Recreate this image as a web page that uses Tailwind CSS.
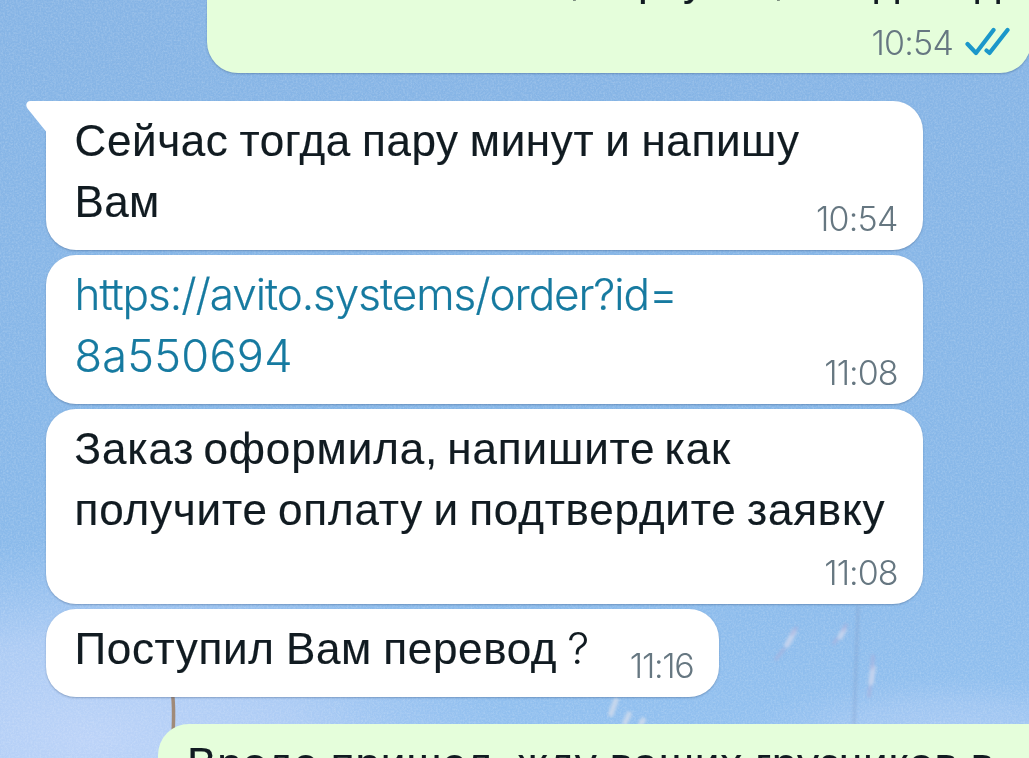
<!DOCTYPE html>
<html lang="ru">
<head>
<meta charset="utf-8">
<title>Чат</title>
<script src="https://cdn.jsdelivr.net/npm/@tailwindcss/browser@4"></script>
</head>
<body class="relative h-[758px] w-[1029px] overflow-hidden bg-[#8abaea] font-['Liberation_Sans',sans-serif] text-[44px] leading-[61px] text-[#111b21]">

<!-- sky wallpaper -->
<svg class="absolute inset-0" width="1029" height="758" viewBox="0 0 1029 758">
  <defs>
    <linearGradient id="sky" x1="0" y1="0" x2="0" y2="1"><stop offset="0" stop-color="#86b4e5"/><stop offset=".65" stop-color="#88b8e9"/><stop offset="1" stop-color="#93c1f0"/></linearGradient>
    <radialGradient id="haze"><stop offset="0" stop-color="#bcd3f8"/><stop offset=".5" stop-color="#b4cff6" stop-opacity=".8"/><stop offset="1" stop-color="#a5c8f3" stop-opacity="0"/></radialGradient>
    <filter id="grain" x="0" y="0" width="100%" height="100%"><feTurbulence type="fractalNoise" baseFrequency=".55" numOctaves="2" seed="4"/><feColorMatrix values="0 0 0 0 1  0 0 0 0 1  0 0 0 0 1  .9 0 0 0 -.33"/></filter>
    <filter id="soft"><feGaussianBlur stdDeviation="1.5"/></filter>
  </defs>
  <rect width="1029" height="758" fill="url(#sky)"/>
  <ellipse cx="90" cy="740" rx="420" ry="200" fill="url(#haze)"/>
  <ellipse cx="950" cy="730" rx="200" ry="55" fill="url(#haze)" opacity=".5"/>
  <rect width="1029" height="758" filter="url(#grain)" opacity=".4"/>
  <path d="M172 690Q174.500 705 173 735" stroke="#a08a78" stroke-width="3.500" fill="none"/>
  <g filter="url(#soft)" stroke-linecap="round">
    <path d="M858 606L854 724" stroke="#839fcb" stroke-width="3" opacity=".4"/>
    <path d="M794 632L787 645M844 630L840 637M873 668L871 683" stroke="#c3d3ee" stroke-width="5.500"/>
    <path d="M796 628L792 634M846 625L843 630M873 656L872 668M784 649L776 659M837 639L834 643M870 687L869 696" stroke="#a9b4df" stroke-width="3.500" opacity=".7"/>
    <path d="M616 700L611 714M629 714L625 723M643 720L641 724" stroke="#d2dced" stroke-width="5.500" opacity=".8"/>
  </g>
</svg>

<main class="relative flex h-[758px] flex-col items-start overflow-hidden">
  <section class="ml-[207px] flex h-[73px] w-[824px] shrink-0 flex-col justify-between overflow-hidden rounded-b-[31px] bg-[#e5fedb] shadow-[0_1px_2px_rgba(40,70,110,.35)]">
    <div class="-mt-[51px] flex h-[61px] pl-[362px] [-webkit-text-stroke:.15px]"><span class="w-[69px]">,</span><span class="w-[45px]">р</span><span class="w-[90px]">у</span><span class="w-[101px]">,</span><span class="w-[101px]">д</span><span>д</span></div>
    <div class="flex items-end justify-end gap-[12px] pr-[20px] pb-[13px]">
      <time class="font-[Inter] text-[34px] leading-[34px] font-light tracking-[-0.8px] text-[#667781] [font-feature-settings:'calt'_0]">10:54</time>
      <svg class="mb-[3px]" width="46" height="30" viewBox="0 0 46 30" fill="none" stroke="#1b97ca" stroke-width="4.200" stroke-linecap="round" stroke-linejoin="round"><path d="M2.500 17L11 26L28.500 3M21.500 23.500L24.500 26L42.500 3"/></svg>
    </div>
  </section>

  <section class="relative mt-[27.500px] ml-[45.500px] flex h-[149px] w-[877px] shrink-0 justify-between rounded-[30px] rounded-tl-none bg-white pt-[9px] pr-[25px] pb-[14px] pl-[29px] shadow-[0_1px_2px_rgba(40,70,110,.35)]">
    <svg class="absolute top-0 -left-[20px]" width="22" height="32" viewBox="0 0 22 32" fill="#fff"><path d="M22 0H4.500C.5 0-1 4 1.500 7.500L20 30.500H22Z"/></svg>
    <p class="whitespace-nowrap [-webkit-text-stroke:.15px]"><span class="tracking-[.62px] [word-spacing:-1.800px]">Сейчас тогда пару минут и напишу</span><br><span class="tracking-[.4px]">Вам</span></p>
    <time class="-ml-20 self-end font-[Inter] text-[34px] leading-[34px] font-light tracking-[-0.8px] text-[#667781] [font-feature-settings:'calt'_0]">10:54</time>
  </section>

  <section class="mt-[5px] ml-[45.500px] flex h-[149px] w-[877px] shrink-0 justify-between rounded-[30px] bg-white pt-[9px] pr-[25px] pb-[14px] pl-[29px] shadow-[0_1px_2px_rgba(40,70,110,.35)]">
    <p class="whitespace-nowrap text-[#167aa0] [-webkit-text-stroke:.2px]"><span class="font-[Inter] font-light tracking-[-1.02px] [font-feature-settings:'calt'_0]">https://avito.systems/order?id=</span><br><span class="font-[Inter] text-[45px] font-light tracking-[.3px]">8a550694</span></p>
    <time class="self-end font-[Inter] text-[34px] leading-[34px] font-light tracking-[-1px] text-[#667781] [font-feature-settings:'calt'_0]">11:08</time>
  </section>

  <section class="mt-[5px] ml-[45.500px] flex h-[195px] w-[877px] shrink-0 flex-col rounded-[30px] bg-white pt-[9px] pr-[25px] pb-[14px] pl-[29px] shadow-[0_1px_2px_rgba(40,70,110,.35)]">
    <p class="whitespace-nowrap [-webkit-text-stroke:.15px]"><span class="tracking-[.88px] [word-spacing:-4px]">Заказ оформила, напишите как</span><br><span class="tracking-[.82px] [word-spacing:-2.7px]">получите оплату и подтвердите заявку</span></p>
    <time class="mt-auto self-end font-[Inter] text-[34px] leading-[34px] font-light tracking-[-1px] text-[#667781] [font-feature-settings:'calt'_0]">11:08</time>
  </section>

  <section class="mt-[5px] ml-[45.500px] flex h-[88px] w-[673px] shrink-0 justify-between rounded-[30px] bg-white pt-[9px] pr-[25px] pb-[14px] pl-[29px] shadow-[0_1px_2px_rgba(40,70,110,.35)]">
    <p class="whitespace-nowrap"><span class="tracking-[.65px] [word-spacing:-1.5px] [-webkit-text-stroke:.15px]">Поступил Вам перевод</span><span class="ml-[10px] font-[Inter] font-light">?</span></p>
    <time class="self-end font-[Inter] text-[34px] leading-[34px] font-light tracking-[-1.3px] text-[#667781] [font-feature-settings:'calt'_0]">11:16</time>
  </section>

  <section class="mt-[27px] ml-[158px] h-[120px] w-[900px] shrink-0 rounded-[31px] bg-[#e5fedb] pt-[9px] pl-[29px] whitespace-nowrap"><p class="tracking-[.85px] [word-spacing:-1px] [-webkit-text-stroke:.15px]">Вроде пришел, жду ваших грузчиков в</p></section>
</main>
</body>
</html>
